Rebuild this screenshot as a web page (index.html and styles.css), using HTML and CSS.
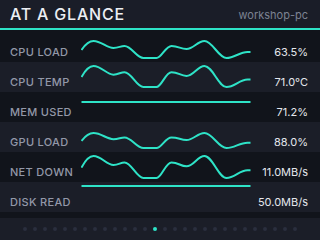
FILE: index.html
```html
<!DOCTYPE html>
<html lang="en">

<head>
    <meta charset="UTF-8">
    <meta name="viewport" content="width=device-width, initial-scale=1.0">
    <title>At a Glance</title>
    <link rel="stylesheet" href="styles.css">
</head>

<body>
    <div class="screen">
        <header class="header">
            <h1>AT A GLANCE</h1>
            <span class="host">workshop-pc</span>
        </header>

        <div class="metrics">
            <div class="metric">
                <span class="label">CPU LOAD</span>
                <svg class="spark" width="170" height="30" viewBox="0 0 170 30">
                    <path class="wave" transform="translate(0.5 9) scale(1 1)" d="M0,9 C4,3 8,0 12,0 C20,0 25,7 32,7 C37,7 39,5 43,5 C50,5 55,17 62,17 L75,17 C80,17 84,5 90,5 C97,5 99,8 105,8 C112,8 116,0 123,0 C131,0 137,17 145,17 C153,17 158,11 166,11 L169,11"/>
                </svg>
                <span class="value">63.5%</span>
            </div>
            <div class="metric">
                <span class="label">CPU TEMP</span>
                <svg class="spark" width="170" height="30" viewBox="0 0 170 30">
                    <path class="wave" transform="translate(0.5 4) scale(1 1.235)" d="M0,9 C4,3 8,0 12,0 C20,0 25,7 32,7 C37,7 39,5 43,5 C50,5 55,17 62,17 L75,17 C80,17 84,5 90,5 C97,5 99,8 105,8 C112,8 116,0 123,0 C131,0 137,17 145,17 C153,17 158,11 166,11 L169,11"/>
                </svg>
                <span class="value">71.0°C</span>
            </div>
            <div class="metric">
                <span class="label">MEM USED</span>
                <svg class="spark" width="170" height="30" viewBox="0 0 170 30">
                    <path class="wave" d="M0.5,10 L169.5,10"/>
                </svg>
                <span class="value">71.2%</span>
            </div>
            <div class="metric">
                <span class="label">GPU LOAD</span>
                <svg class="spark" width="170" height="30" viewBox="0 0 170 30">
                    <path class="wave" transform="translate(0.5 11) scale(1 0.882)" d="M0,9 C4,3 8,0 12,0 C20,0 25,7 32,7 C37,7 39,5 43,5 C50,5 55,17 62,17 L75,17 C80,17 84,5 90,5 C97,5 99,8 105,8 C112,8 116,0 123,0 C131,0 137,17 145,17 C153,17 158,11 166,11 L169,11"/>
                </svg>
                <span class="value">88.0%</span>
            </div>
            <div class="metric">
                <span class="label">NET DOWN</span>
                <svg class="spark" width="170" height="30" viewBox="0 0 170 30">
                    <path class="wave" transform="translate(0.5 4) scale(1 1.294)" d="M0,9 C4,3 8,0 12,0 C20,0 25,7 32,7 C37,7 39,5 43,5 C50,5 55,17 62,17 L75,17 C80,17 84,5 90,5 C97,5 99,8 105,8 C112,8 116,0 123,0 C131,0 137,17 145,17 C153,17 158,11 166,11 L169,11"/>
                </svg>
                <span class="value">11.0MB/s</span>
            </div>
            <div class="metric">
                <span class="label">DISK READ</span>
                <svg class="spark" width="170" height="30" viewBox="0 0 170 30">
                    <path class="wave" d="M0.5,4 L169.5,4"/>
                </svg>
                <span class="value">50.0MB/s</span>
            </div>
        </div>

        <footer class="pager">
            <span class="dot"></span><span class="dot"></span><span class="dot"></span><span class="dot"></span>
            <span class="dot"></span><span class="dot"></span><span class="dot"></span><span class="dot"></span>
            <span class="dot"></span><span class="dot"></span><span class="dot"></span><span class="dot"></span>
            <span class="dot"></span><span class="dot active"></span><span class="dot"></span><span class="dot"></span>
            <span class="dot"></span><span class="dot"></span><span class="dot"></span><span class="dot"></span>
            <span class="dot"></span><span class="dot"></span><span class="dot"></span><span class="dot"></span>
            <span class="dot"></span><span class="dot"></span><span class="dot"></span><span class="dot"></span>
        </footer>
    </div>
</body>

</html>
```

FILE: styles.css
```css
:root {
    --teal: #2ee3c7;
    --bg-dark: #11141b;
    --bg-light: #1b1e28;
    --header-bg: #1a1d28;
    --label: #9398a8;
    --value: #e4e6ec;
    --dot: #2a2f3e;
}

* {
    margin: 0;
    padding: 0;
    box-sizing: border-box;
}

body {
    font-family: Inter, "Noto Sans", sans-serif;
    background-color: var(--bg-dark);
    width: 320px;
    height: 240px;
    overflow: hidden;
}

.screen {
    display: flex;
    flex-direction: column;
    height: 240px;
}

.header {
    display: flex;
    justify-content: space-between;
    align-items: flex-end;
    height: 30px;
    padding: 0 12px 6px 10px;
    background-color: var(--header-bg);
    border-bottom: 2px solid var(--teal);
}

.header h1 {
    font-size: 16px;
    font-weight: 500;
    line-height: 16px;
    letter-spacing: 0.8px;
    color: #eceef3;
}

.host {
    font-size: 11px;
    line-height: 13px;
    color: #7c8292;
}

.metrics {
    padding-top: 2px;
}

.metric {
    display: grid;
    grid-template-columns: 81px 170px 1fr;
    height: 30px;
}

.metric:nth-child(even) {
    background-color: var(--bg-light);
}

.label,
.value {
    align-self: end;
    font-size: 11px;
    line-height: 14px;
    padding-bottom: 3px;
}

.label {
    padding-left: 10px;
    color: var(--label);
    font-weight: 500;
    letter-spacing: 0.3px;
    white-space: nowrap;
}

.value {
    padding-right: 12px;
    text-align: right;
    color: var(--value);
}

.spark {
    display: block;
}

.wave {
    fill: none;
    stroke: var(--teal);
    stroke-width: 2;
    vector-effect: non-scaling-stroke;
}

.pager {
    display: flex;
    justify-content: center;
    align-items: center;
    gap: 6px;
    margin-top: 6px;
    flex: 1;
    background-color: var(--bg-light);
}

.dot {
    width: 4px;
    height: 4px;
    border-radius: 50%;
    background-color: var(--dot);
}

.dot.active {
    background-color: var(--teal);
}
```
